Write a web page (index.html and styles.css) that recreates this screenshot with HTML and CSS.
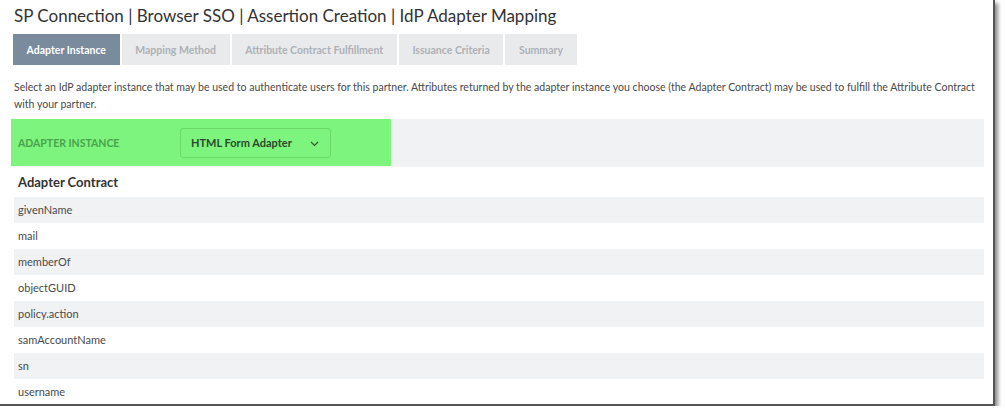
FILE: index.html
```html
<!DOCTYPE html>
<html>
<head>
<meta charset="utf-8">
<link rel="stylesheet" href="styles.css">
</head>
<body>
<div class="frame">
  <h1 class="title">SP Connection | Browser SSO | Assertion Creation | IdP Adapter Mapping</h1>
  <div class="tabs">
    <div class="tab active">Adapter Instance</div>
    <div class="tab">Mapping Method</div>
    <div class="tab">Attribute Contract Fulfillment</div>
    <div class="tab">Issuance Criteria</div>
    <div class="tab">Summary</div>
  </div>
  <p class="desc">Select an IdP adapter instance that may be used to authenticate users for this partner. Attributes returned by the adapter instance you choose (the Adapter Contract) may be used to fulfill the Attribute Contract with your partner.</p>
  <div class="instance-row">
    <div class="highlight">
      <span class="label">ADAPTER INSTANCE</span>
      <div class="select">
        <span>HTML Form Adapter</span>
        <svg class="chev" width="9" height="6" viewBox="0 0 9 6"><path d="M1 1 L4.5 4.5 L8 1" fill="none" stroke="#2d5a2d" stroke-width="1.2"/></svg>
      </div>
    </div>
  </div>
  <div class="contract-head">Adapter Contract</div>
  <div class="rows">
    <div class="row">givenName</div>
    <div class="row">mail</div>
    <div class="row">memberOf</div>
    <div class="row">objectGUID</div>
    <div class="row">policy.action</div>
    <div class="row">samAccountName</div>
    <div class="row">sn</div>
    <div class="row">username</div>
  </div>
</div>
</body>
</html>
```

FILE: styles.css
```css
html, body {
  margin: 0;
  padding: 0;
  background: #ffffff;
}
body {
  font-family: "Lato", "Open Sans", sans-serif;
  color: #444;
}
.frame {
  width: 993px;
  height: 404px;
  border-right: 2px solid #555;
  border-bottom: 2px solid #555;
  box-shadow: 3px 3px 4px rgba(0,0,0,0.45);
  background: #fff;
  overflow: hidden;
  box-sizing: content-box;
}
.title {
  margin: 6px 0 0 14px;
  font-size: 17px;
  line-height: 20px;
  font-weight: 400;
  color: #333;
}
.tabs {
  display: flex;
  gap: 2px;
  margin: 8px 0 0 13px;
  height: 31px;
}
.tab {
  display: flex;
  align-items: center;
  justify-content: center;
  background: #e9eaec;
  color: #aeb1b6;
  font-size: 10.5px;
  font-weight: 700;
  padding: 0 13.6px;
}
.tab.active {
  background: #7a8b9e;
  color: #fff;
}
.desc {
  margin: 14px 16px 0 14px;
  font-size: 10.55px;
  line-height: 17px;
  color: #4a4a4a;
}
.instance-row {
  margin: 6px 0 0 12px;
  width: 972px;
  height: 48px;
  background: #f1f2f4;
}
.highlight {
  width: 380px;
  height: 47px;
  background: #7df47d;
  display: flex;
  align-items: center;
  margin-left: -1px;
}
.label {
  width: 162px;
  padding-left: 7px;
  font-size: 10.5px;
  font-weight: 700;
  color: #47a34c;
}
.select {
  width: 151px;
  height: 30px;
  border: 1px solid #6cd86c;
  border-radius: 3px;
  display: flex;
  align-items: center;
  justify-content: space-between;
  padding: 0 10px;
  box-sizing: border-box;
  font-size: 11px;
  font-weight: 700;
  color: #2c4a2c;
}
.chev {
  margin-top: 2px;
  margin-right: 1px;
}
.contract-head {
  margin-left: 18px;
  height: 30px;
  line-height: 30px;
  font-size: 13px;
  font-weight: 700;
  color: #333;
}
.rows {
  margin-left: 14px;
  width: 970px;
}
.row {
  height: 26px;
  line-height: 26px;
  padding-left: 4px;
  font-size: 11px;
  color: #4a4a4a;
}
.row:nth-child(odd) {
  background: #f1f2f4;
}
```
